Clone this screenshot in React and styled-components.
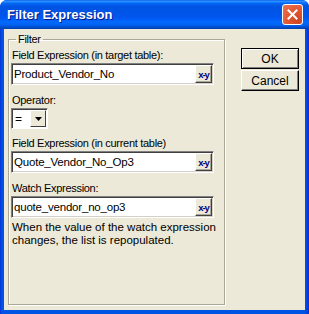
import React from 'react';
import styled, { createGlobalStyle } from 'styled-components';

const GlobalStyle = createGlobalStyle`
  html, body {
    margin: 0;
    padding: 0;
    background: #ffffff;
  }
  * {
    box-sizing: border-box;
  }
`;

const Window = styled.div`
  width: 309px;
  height: 314px;
  display: flex;
  flex-direction: column;
  background: linear-gradient(to right, #0831d9 0px, #0054e3 2px, #0054e3 305px, #0831d9 309px);
  border-radius: 7px 7px 0 0;
  font-family: "Liberation Sans", Arial, sans-serif;
  font-size: 11px;
  letter-spacing: -0.3px;
  color: #000;
`;

const TitleBar = styled.div`
  height: 29px;
  flex: none;
  display: flex;
  align-items: center;
  justify-content: space-between;
  padding: 0 6px 0 7px;
  border-radius: 7px 7px 0 0;
  background: linear-gradient(to bottom, #0058ee 0%, #3593ff 4%, #288eff 6%, #127dff 8%, #036ffc 10%, #0262ee 14%, #0057e5 20%, #0054e3 24%, #0055eb 56%, #005bf5 66%, #026afe 76%, #0062ef 86%, #0052d6 92%, #0040ab 100%);
`;

const Title = styled.span`
  color: #fff;
  font-weight: bold;
  font-size: 13px;
  letter-spacing: 0;
  text-shadow: 1px 1px 0 #0a1883;
`;

const CloseButton = styled.div`
  width: 21px;
  height: 21px;
  border: 1px solid #fff;
  border-radius: 3px;
  background: radial-gradient(circle at 80% 80%, #cc4625 0%, #e0562f 45%, #e87756 100%);
  display: flex;
  align-items: center;
  justify-content: center;
`;

const Body = styled.div`
  flex: 1;
  min-height: 0;
  overflow: hidden;
  margin: 0 4px 4px 4px;
  background: #ece9d8;
  display: flex;
  align-items: stretch;
  padding: 4px 0 5px 4px;
`;

const Group = styled.fieldset`
  width: 217px;
  margin: 0;
  padding: 1px 0 0 2px;
  border: 1px solid #aca899;
  box-shadow: 1px 1px 0 #fff, inset 1px 1px 0 #fff;
  border-radius: 0;
  display: flex;
  flex-direction: column;
  align-items: flex-start;
`;

const Legend = styled.legend`
  padding: 0 2px;
  margin-left: 5px;
  line-height: 13px;
`;

const Label = styled.div`
  line-height: 13px;
  margin-top: ${(p) => p.$gap || 0}px;
  margin-left: 1px;
`;

const Field = styled.div`
  width: 203px;
  height: 22px;
  margin-top: 1px;
  display: flex;
  align-items: stretch;
  background: #fff;
  border-top: 1px solid #808080;
  border-left: 1px solid #808080;
  border-right: 1px solid #fff;
  border-bottom: 1px solid #fff;
  box-shadow: inset 1px 1px 0 #404040, inset -1px -1px 0 #d4d0c8;
`;

const FieldText = styled.div`
  flex: 1;
  padding: 0 0 0 2px;
  display: flex;
  align-items: center;
  font-size: 11.5px;
  letter-spacing: -0.2px;
`;

const PickButton = styled.div`
  width: 17px;
  background: #ece9d8;
  border-top: 1px solid #fff;
  border-left: 1px solid #fff;
  border-right: 1px solid #404040;
  border-bottom: 1px solid #404040;
  box-shadow: inset -1px -1px 0 #aca899;
  margin: 1px 1px 1px 0;
  display: flex;
  align-items: center;
  justify-content: center;
  color: #000080;
  font-weight: 900;
  font-size: 9.5px;
  letter-spacing: -1px;
`;

const Combo = styled.div`
  width: 37px;
  height: 21px;
  margin-top: 1px;
  display: flex;
  background: #fff;
  border-top: 1px solid #808080;
  border-left: 1px solid #808080;
  border-right: 1px solid #fff;
  border-bottom: 1px solid #fff;
  box-shadow: inset 1px 1px 0 #404040;
`;

const ComboText = styled.div`
  flex: 1;
  padding-left: 3px;
  display: flex;
  align-items: center;
  font-size: 12px;
`;

const ComboArrow = styled.div`
  width: 16px;
  margin: 1px 1px 1px 0;
  background: #ece9d8;
  border-top: 1px solid #fff;
  border-left: 1px solid #fff;
  border-right: 1px solid #404040;
  border-bottom: 1px solid #404040;
  display: flex;
  align-items: center;
  justify-content: center;
`;

const Note = styled.div`
  margin: 3px 0 0 1px;
  line-height: 13px;
  font-size: 11.5px;
  letter-spacing: 0;
  width: 212px;
`;

const Side = styled.div`
  align-self: flex-start;
  margin: 15px 0 0 16px;
  display: flex;
  flex-direction: column;
  gap: 1px;
`;

const Button = styled.div`
  width: 58px;
  height: 21px;
  background: #ece9d8;
  display: flex;
  align-items: center;
  justify-content: center;
  font-size: 12px;
  letter-spacing: 0;
  border: 1px solid ${(p) => (p.$default ? '#000' : '#fff')};
  border-right-color: #000;
  border-bottom-color: #000;
  box-shadow: ${(p) =>
    p.$default
      ? 'inset 1px 1px 0 #fff, inset -1px -1px 0 #808080'
      : 'inset -1px -1px 0 #808080'};
`;

const ExprField = ({ value }) => (
  <Field>
    <FieldText>{value}</FieldText>
    <PickButton>x-y</PickButton>
  </Field>
);

export default function App() {
  return (
    <>
      <GlobalStyle />
      <Window>
        <TitleBar>
          <Title>Filter Expression</Title>
          <CloseButton>
            <svg width="11" height="11" viewBox="0 0 11 11">
              <path d="M1.5 1.5 L9.5 9.5 M9.5 1.5 L1.5 9.5" stroke="#fff" strokeWidth="2" strokeLinecap="square" />
            </svg>
          </CloseButton>
        </TitleBar>
        <Body>
          <Group>
            <Legend>Filter</Legend>
            <Label $gap={2}>Field Expression (in target table):</Label>
            <ExprField value="Product_Vendor_No" />
            <Label $gap={9}>Operator:</Label>
            <Combo>
              <ComboText>=</ComboText>
              <ComboArrow>
                <svg width="7" height="4" viewBox="0 0 7 4">
                  <path d="M0 0 H7 L3.5 4 Z" fill="#000" />
                </svg>
              </ComboArrow>
            </Combo>
            <Label $gap={8}>Field Expression (in current table)</Label>
            <ExprField value="Quote_Vendor_No_Op3" />
            <Label $gap={9}>Watch Expression:</Label>
            <ExprField value="quote_vendor_no_op3" />
            <Note>When the value of the watch expression changes, the list is repopulated.</Note>
          </Group>
          <Side>
            <Button $default>OK</Button>
            <Button>Cancel</Button>
          </Side>
        </Body>
      </Window>
    </>
  );
}
